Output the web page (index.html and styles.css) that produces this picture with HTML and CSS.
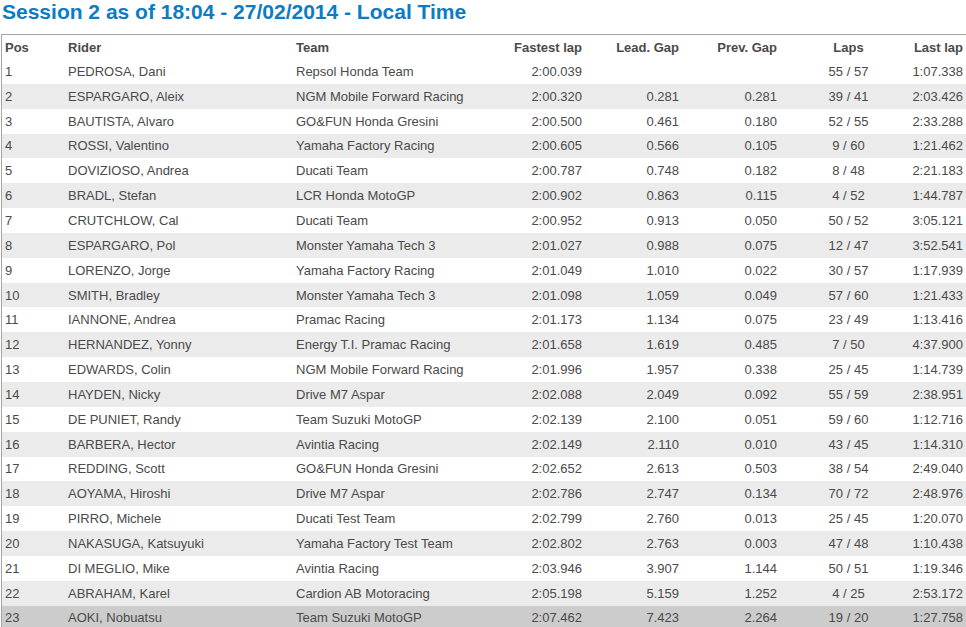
FILE: index.html
```html
<!DOCTYPE html>
<html>
<head>
<meta charset="utf-8">
<link rel="stylesheet" href="styles.css">
</head>
<body>
<h1 class="title">Session 2 as of 18:04 - 27/02/2014 - Local Time</h1>
<div class="wrap">
<table class="results">
<colgroup>
<col class="c-pos"><col class="c-rider"><col class="c-team"><col class="c-fast"><col class="c-lead"><col class="c-prev"><col class="c-laps"><col class="c-last">
</colgroup>
<thead>
<tr><th class="l">Pos</th><th class="l">Rider</th><th class="l">Team</th><th class="r">Fastest lap</th><th class="r">Lead. Gap</th><th class="r">Prev. Gap</th><th class="c">Laps</th><th class="r">Last lap</th></tr>
</thead>
<tbody>
<tr><td>1</td><td>PEDROSA, Dani</td><td>Repsol Honda Team</td><td class="r">2:00.039</td><td class="r"></td><td class="r"></td><td class="c">55 / 57</td><td class="r">1:07.338</td></tr>
<tr><td>2</td><td>ESPARGARO, Aleix</td><td>NGM Mobile Forward Racing</td><td class="r">2:00.320</td><td class="r">0.281</td><td class="r">0.281</td><td class="c">39 / 41</td><td class="r">2:03.426</td></tr>
<tr><td>3</td><td>BAUTISTA, Alvaro</td><td>GO&amp;FUN Honda Gresini</td><td class="r">2:00.500</td><td class="r">0.461</td><td class="r">0.180</td><td class="c">52 / 55</td><td class="r">2:33.288</td></tr>
<tr><td>4</td><td>ROSSI, Valentino</td><td>Yamaha Factory Racing</td><td class="r">2:00.605</td><td class="r">0.566</td><td class="r">0.105</td><td class="c">9 / 60</td><td class="r">1:21.462</td></tr>
<tr><td>5</td><td>DOVIZIOSO, Andrea</td><td>Ducati Team</td><td class="r">2:00.787</td><td class="r">0.748</td><td class="r">0.182</td><td class="c">8 / 48</td><td class="r">2:21.183</td></tr>
<tr><td>6</td><td>BRADL, Stefan</td><td>LCR Honda MotoGP</td><td class="r">2:00.902</td><td class="r">0.863</td><td class="r">0.115</td><td class="c">4 / 52</td><td class="r">1:44.787</td></tr>
<tr><td>7</td><td>CRUTCHLOW, Cal</td><td>Ducati Team</td><td class="r">2:00.952</td><td class="r">0.913</td><td class="r">0.050</td><td class="c">50 / 52</td><td class="r">3:05.121</td></tr>
<tr><td>8</td><td>ESPARGARO, Pol</td><td>Monster Yamaha Tech 3</td><td class="r">2:01.027</td><td class="r">0.988</td><td class="r">0.075</td><td class="c">12 / 47</td><td class="r">3:52.541</td></tr>
<tr><td>9</td><td>LORENZO, Jorge</td><td>Yamaha Factory Racing</td><td class="r">2:01.049</td><td class="r">1.010</td><td class="r">0.022</td><td class="c">30 / 57</td><td class="r">1:17.939</td></tr>
<tr><td>10</td><td>SMITH, Bradley</td><td>Monster Yamaha Tech 3</td><td class="r">2:01.098</td><td class="r">1.059</td><td class="r">0.049</td><td class="c">57 / 60</td><td class="r">1:21.433</td></tr>
<tr><td>11</td><td>IANNONE, Andrea</td><td>Pramac Racing</td><td class="r">2:01.173</td><td class="r">1.134</td><td class="r">0.075</td><td class="c">23 / 49</td><td class="r">1:13.416</td></tr>
<tr><td>12</td><td>HERNANDEZ, Yonny</td><td>Energy T.I. Pramac Racing</td><td class="r">2:01.658</td><td class="r">1.619</td><td class="r">0.485</td><td class="c">7 / 50</td><td class="r">4:37.900</td></tr>
<tr><td>13</td><td>EDWARDS, Colin</td><td>NGM Mobile Forward Racing</td><td class="r">2:01.996</td><td class="r">1.957</td><td class="r">0.338</td><td class="c">25 / 45</td><td class="r">1:14.739</td></tr>
<tr><td>14</td><td>HAYDEN, Nicky</td><td>Drive M7 Aspar</td><td class="r">2:02.088</td><td class="r">2.049</td><td class="r">0.092</td><td class="c">55 / 59</td><td class="r">2:38.951</td></tr>
<tr><td>15</td><td>DE PUNIET, Randy</td><td>Team Suzuki MotoGP</td><td class="r">2:02.139</td><td class="r">2.100</td><td class="r">0.051</td><td class="c">59 / 60</td><td class="r">1:12.716</td></tr>
<tr><td>16</td><td>BARBERA, Hector</td><td>Avintia Racing</td><td class="r">2:02.149</td><td class="r">2.110</td><td class="r">0.010</td><td class="c">43 / 45</td><td class="r">1:14.310</td></tr>
<tr><td>17</td><td>REDDING, Scott</td><td>GO&amp;FUN Honda Gresini</td><td class="r">2:02.652</td><td class="r">2.613</td><td class="r">0.503</td><td class="c">38 / 54</td><td class="r">2:49.040</td></tr>
<tr><td>18</td><td>AOYAMA, Hiroshi</td><td>Drive M7 Aspar</td><td class="r">2:02.786</td><td class="r">2.747</td><td class="r">0.134</td><td class="c">70 / 72</td><td class="r">2:48.976</td></tr>
<tr><td>19</td><td>PIRRO, Michele</td><td>Ducati Test Team</td><td class="r">2:02.799</td><td class="r">2.760</td><td class="r">0.013</td><td class="c">25 / 45</td><td class="r">1:20.070</td></tr>
<tr><td>20</td><td>NAKASUGA, Katsuyuki</td><td>Yamaha Factory Test Team</td><td class="r">2:02.802</td><td class="r">2.763</td><td class="r">0.003</td><td class="c">47 / 48</td><td class="r">1:10.438</td></tr>
<tr><td>21</td><td>DI MEGLIO, Mike</td><td>Avintia Racing</td><td class="r">2:03.946</td><td class="r">3.907</td><td class="r">1.144</td><td class="c">50 / 51</td><td class="r">1:19.346</td></tr>
<tr><td>22</td><td>ABRAHAM, Karel</td><td>Cardion AB Motoracing</td><td class="r">2:05.198</td><td class="r">5.159</td><td class="r">1.252</td><td class="c">4 / 25</td><td class="r">2:53.172</td></tr>
<tr class="hover"><td>23</td><td>AOKI, Nobuatsu</td><td>Team Suzuki MotoGP</td><td class="r">2:07.462</td><td class="r">7.423</td><td class="r">2.264</td><td class="c">19 / 20</td><td class="r">1:27.758</td></tr>
</tbody>
</table>
</div>
</body>
</html>
```

FILE: styles.css
```css
html, body {
  margin: 0;
  padding: 0;
  background: #ffffff;
  overflow: hidden;
}
body {
  font-family: "Liberation Sans", Arial, sans-serif;
  color: #4a4a4a;
}
.title {
  margin: 0;
  padding: 0 0 0 2px;
  height: 34px;
  font-size: 21px;
  line-height: 24px;
  font-weight: bold;
  color: #0c7cc5;
}
.wrap {
  margin-left: 1px;
  border-top: 1px solid #a6a6a6;
  border-left: 1px solid #a6a6a6;
  width: 980px;
}
.results {
  table-layout: fixed;
  border-collapse: collapse;
  width: 965px;
  font-size: 13px;
}
.c-pos { width: 63px; }
.c-rider { width: 228px; }
.c-team { width: 193px; }
.c-fast { width: 100px; }
.c-lead { width: 97px; }
.c-prev { width: 98px; }
.c-laps { width: 120px; }
.c-last { width: 66px; }
.results th, .results td {
  padding: 0 4px 0 3px;
  white-space: nowrap;
  text-align: left;
  overflow: visible;
}
.results th {
  height: 24px;
  font-weight: bold;
  color: #4a4a4a;
}
.results td {
  height: 24.85px;
}
.results .r { text-align: right; }
.results .c { text-align: center; padding-left: 19px; }
.results tbody tr:nth-child(even) { background: #ebebeb; }
.results tbody tr.hover { background: #cccccc; }
```
